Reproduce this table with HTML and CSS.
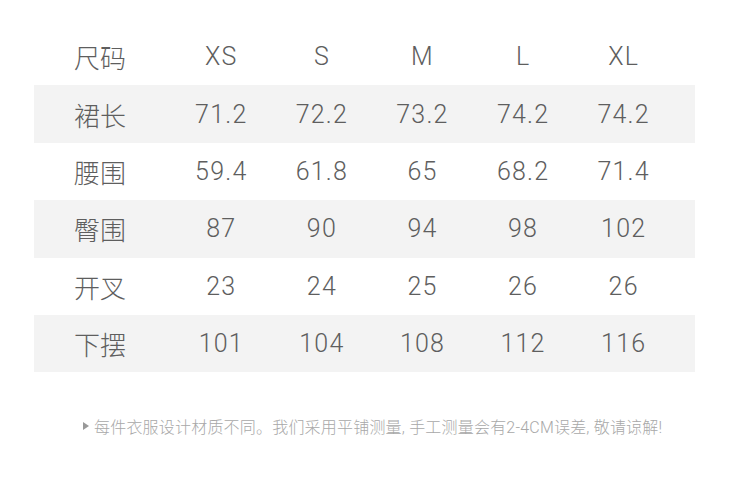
FILE: index.html
```html
<!DOCTYPE html>
<html lang="zh">
<head>
<meta charset="utf-8">
<link rel="stylesheet" href="styles.css">
</head>
<body>
<div class="page">
  <div class="table">
    <div class="row head"><div class="label">尺码</div><div class="cell">XS</div><div class="cell">S</div><div class="cell">M</div><div class="cell">L</div><div class="cell">XL</div></div>
    <div class="row band"><div class="label">裙长</div><div class="cell">71.2</div><div class="cell">72.2</div><div class="cell">73.2</div><div class="cell">74.2</div><div class="cell">74.2</div></div>
    <div class="row"><div class="label">腰围</div><div class="cell">59.4</div><div class="cell">61.8</div><div class="cell">65</div><div class="cell">68.2</div><div class="cell">71.4</div></div>
    <div class="row band"><div class="label">臀围</div><div class="cell">87</div><div class="cell">90</div><div class="cell">94</div><div class="cell">98</div><div class="cell">102</div></div>
    <div class="row"><div class="label">开叉</div><div class="cell">23</div><div class="cell">24</div><div class="cell">25</div><div class="cell">26</div><div class="cell">26</div></div>
    <div class="row band"><div class="label">下摆</div><div class="cell">101</div><div class="cell">104</div><div class="cell">108</div><div class="cell">112</div><div class="cell">116</div></div>
  </div>
  <p class="note"><span class="tri"></span>每件衣服设计材质不同。我们采用平铺测量, 手工测量会有2-4CM误差, 敬请谅解!</p>
</div>
</body>
</html>
```
FILE: styles.css
```css
html, body {
  margin: 0;
  padding: 0;
  background: #fff;
}
.page {
  padding: 28px 0 0 34px;
  font-family: Roboto, "Noto Sans CJK SC", sans-serif;
  font-weight: 300;
  color: #5e5e5e;
}
.table {
  width: 661px;
}
.row {
  display: grid;
  grid-template-columns: 137px repeat(5, 100.6px);
  height: 57.4px;
  align-items: center;
  font-size: 25px;
  letter-spacing: 1.2px;
}
.band {
  background: #f3f3f3;
}
.label {
  padding-left: 40px;
  letter-spacing: 0;
  font-size: 26px;
}
.cell {
  text-align: center;
}
.note {
  margin: 42px 0 0 49px;
  font-size: 16px;
  letter-spacing: 0.2px;
  color: #a8a8a8;
  display: flex;
  align-items: center;
  gap: 5px;
}
.tri {
  width: 0;
  height: 0;
  border-top: 4px solid transparent;
  border-bottom: 4px solid transparent;
  border-left: 6px solid #999;
}
```
